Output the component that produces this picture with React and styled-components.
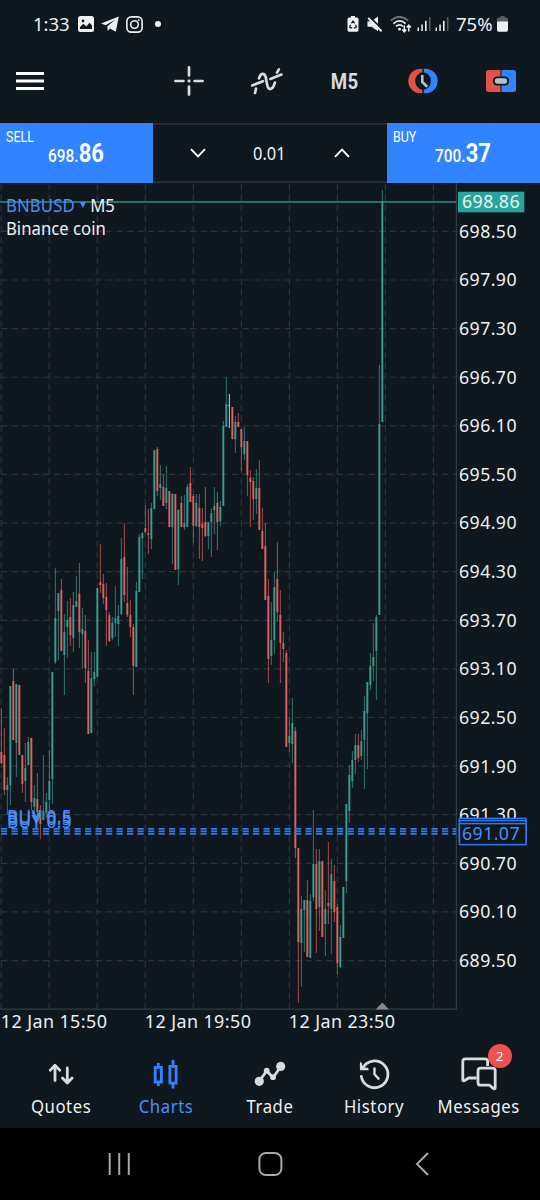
import React from 'react';
import styled, { createGlobalStyle, css } from 'styled-components';

const colors = {
    background: '#0f171f',
    text: '#eef0f2',
    icon: '#d9dbdd',
    blue: '#3183ff',
    link: '#4a8ff5',
    up: '#3a9c90',
    down: '#e0605c',
    flat: '#b9bcb8',
    tag: '#26a69a',
    grid: '#2b343c',
    border: '#333b43',
    badge: '#ef5050'
};

const fonts = {
    main: '"Noto Sans", "Open Sans", sans-serif',
    narrow: 'Roboto, "Liberation Sans", sans-serif'
};

const GlobalStyle = createGlobalStyle`
    * { box-sizing: border-box; }
    body {
        margin: 0;
        background: ${colors.background};
        color: ${colors.text};
        font-family: ${fonts.main};
    }
    svg { display: block; flex: none; }
`;

const Screen = styled.div`
    display: flex;
    flex-direction: column;
    width: 540px;
    height: 1200px;
    overflow: hidden;
    background: ${colors.background};
`;

const StatusBar = styled.header`
    display: flex;
    justify-content: space-between;
    align-items: center;
    height: 48px;
    padding: 0 32px 0 33px;
`;

const StatusGroup = styled.div`
    display: flex;
    align-items: center;
    gap: ${props => props.gap || '6px'};
`;

const StatusText = styled.span`
    width: ${props => props.width || '38px'};
    font-size: 18.5px;
    line-height: 24px;
    white-space: nowrap;
`;

const Toolbar = styled.nav`
    display: grid;
    grid-template-columns: 60px 90px 78px 78px 78px 78px 78px;
    align-items: center;
    height: 75px;
`;

const ToolButton = styled.button`
    display: flex;
    justify-content: center;
    align-items: center;
    height: 66px;
    margin-top: -9px;
    padding: 0;
    border: 0;
    background: none;
    color: ${colors.icon};
`;

const Period = styled.span`
    font-family: ${fonts.narrow};
    font-size: 22.5px;
    font-weight: 700;
    letter-spacing: 0.3px;
    transform: scaleX(0.83);
`;

const Ticket = styled.section`
    display: grid;
    grid-template-columns: 152.5px 1fr 153px;
    height: 60px;
`;

const Deal = styled.button`
    display: flex;
    flex-direction: column;
    padding: 7px 0 0 6px;
    border: 0;
    background: ${colors.blue};
    color: #fff;
    font-family: ${fonts.narrow};
    text-align: left;
`;

const DealName = styled.span`
    font-size: 14.5px;
    line-height: 16px;
    transform: scaleX(0.86);
    transform-origin: left;
`;

const DealPrice = styled.span`
    display: flex;
    justify-content: center;
    align-items: baseline;
    width: 140px;
    margin-top: -4px;
    font-size: 17.5px;
    font-weight: 500;
    line-height: 24px;
    transform: scaleX(0.88);

    b {
        font-size: 25px;
        font-weight: 700;
    }
`;

const Volume = styled.div`
    display: grid;
    grid-template-columns: 90px 1fr 90px;
    align-items: center;
    justify-items: center;
    border-top: 2px solid #262c33;
    border-bottom: 2px solid #262c33;
`;

const VolumeValue = styled.span`
    font-size: 17.5px;
    transform: scaleX(0.94);
`;

const ChartArea = styled.main`
    position: relative;
    height: 857px;
`;

const Caption = styled.div`
    position: absolute;
    top: 11px;
    left: 6px;
    font-size: 17.5px;
    line-height: 22.5px;
    white-space: nowrap;
    transform: scaleX(0.955);
    transform-origin: left;
`;

const SymbolRow = styled.div`
    display: flex;
    align-items: center;
    gap: 4.5px;
`;

const SymbolName = styled.span`
    color: ${colors.link};
    letter-spacing: 0.15px;
`;

const AxisText = styled.text`
    font-family: ${fonts.main};
    font-size: 17.3px;
    letter-spacing: 0.4px;
    fill: ${colors.text};
    ${props => props.$color && css`fill: ${props.$color};`}
`;

const TabBar = styled.nav`
    display: grid;
    grid-template-columns: repeat(5, 1fr);
    height: 88px;
    padding: 16px 9px 0;
`;

const Tab = styled.button`
    position: relative;
    display: flex;
    flex-direction: column;
    align-items: center;
    padding: 0;
    border: 0;
    background: none;
    color: ${props => props.$active ? colors.blue : colors.icon};
`;

const TabLabel = styled.span`
    margin-top: 1px;
    font-family: ${fonts.main};
    font-size: 17.8px;
    line-height: 26px;
    letter-spacing: 0.6px;
    color: ${props => props.$active ? colors.link : colors.text};
    transform: scaleX(0.94);
`;

const Badge = styled.span`
    position: absolute;
    top: -12px;
    left: 61px;
    width: 24px;
    height: 24px;
    border-radius: 50%;
    background: ${colors.badge};
    color: #fff;
    font-family: ${fonts.main};
    font-size: 13px;
    line-height: 24px;
    text-align: center;
`;

const SystemBar = styled.footer`
    display: grid;
    grid-template-columns: 119px 151px 152px;
    flex: 1;
    background: #000;
`;

const SystemButton = styled.button`
    display: flex;
    justify-content: flex-end;
    align-items: center;
    padding: 0;
    border: 0;
    background: none;

    svg { margin-right: -14px; }
`;

// [high, body top, body bottom, low, direction], in page pixels
const candles = [
    [708, 752, 763, 764, 'd'], [728, 755, 790, 795, 'd'], [777, 785, 790, 815, 'u'], [686, 686, 785, 805, 'u'],
    [669, 681, 740, 740, 'd'], [684, 684, 743, 777, 'u'], [685, 685, 755, 755, 'd'], [755, 755, 784, 793, 'd'],
    [743, 768, 781, 802, 'u'], [737, 742, 765, 765, 'u'], [738, 738, 802, 810, 'd'], [785, 798, 807, 813, 'u'],
    [773, 799, 812, 822, 'd'], [805, 810, 824, 839, 'd'], [755, 811, 820, 820, 'u'], [793, 802, 813, 818, 'u'],
    [750, 781, 800, 813, 'u'], [672, 672, 779, 804, 'u'], [568, 618, 662, 664, 'u'], [593, 593, 611, 660, 'u'],
    [579, 590, 651, 651, 'd'], [614, 632, 655, 695, 'u'], [601, 620, 627, 658, 'u'], [598, 617, 635, 646, 'd'],
    [592, 605, 638, 652, 'u'], [576, 601, 607, 607, 'u'], [563, 594, 632, 648, 'd'], [608, 629, 634, 669, 'u'],
    [615, 631, 668, 683, 'd'], [640, 671, 734, 734, 'd'], [652, 678, 733, 733, 'u'], [652, 672, 679, 686, 'u'],
    [588, 588, 677, 677, 'u'], [544, 582, 585, 593, 'd'], [574, 584, 598, 604, 'd'], [583, 597, 610, 646, 'd'],
    [612, 615, 641, 642, 'd'], [617, 623, 638, 640, 'u'], [586, 618, 623, 637, 'u'], [605, 616, 624, 646, 'u'],
    [538, 559, 614, 615, 'u'], [523, 557, 595, 602, 'd'], [567, 603, 615, 617, 'd'], [600, 615, 627, 637, 'd'],
    [624, 627, 666, 695, 'd'], [582, 591, 667, 667, 'u'], [534, 537, 592, 592, 'u'], [532, 533, 538, 579, 'u'],
    [505, 528, 532, 533, 'd'], [509, 533, 535, 554, 'd'], [503, 508, 539, 549, 'u'], [450, 450, 509, 509, 'u'],
    [447, 449, 491, 496, 'd'], [465, 484, 488, 500, 'u'], [474, 487, 506, 506, 'd'], [466, 488, 503, 509, 'u'],
    [491, 491, 527, 527, 'd'], [493, 494, 527, 564, 'u'], [494, 494, 570, 570, 'd'], [509, 510, 569, 585, 'u'],
    [496, 503, 527, 527, 'd'], [495, 523, 527, 530, 'u'], [484, 487, 527, 527, 'u'], [467, 483, 502, 502, 'd'],
    [494, 496, 526, 543, 'd'], [494, 503, 526, 527, 'u'], [494, 508, 527, 559, 'd'], [508, 524, 528, 561, 'd'],
    [487, 522, 536, 537, 'd'], [522, 522, 536, 549, 'u'], [508, 513, 522, 557, 'u'], [487, 506, 510, 534, 'u'],
    [492, 503, 522, 550, 'd'], [501, 507, 521, 526, 'u'], [421, 426, 506, 506, 'u'], [377, 404, 427, 427, 'u'],
    [394, 405, 406, 428, 'f'], [407, 407, 439, 439, 'd'], [416, 422, 439, 453, 'u'], [413, 422, 427, 427, 'd'],
    [429, 429, 447, 471, 'd'], [427, 441, 454, 460, 'u'], [441, 441, 475, 496, 'd'], [470, 478, 482, 527, 'd'],
    [477, 481, 499, 520, 'd'], [469, 488, 499, 514, 'u'], [460, 488, 530, 530, 'd'], [508, 531, 549, 549, 'd'],
    [523, 546, 600, 600, 'd'], [579, 596, 659, 683, 'd'], [602, 640, 656, 665, 'u'], [572, 587, 640, 654, 'u'],
    [542, 579, 612, 622, 'd'], [590, 615, 643, 683, 'd'], [632, 643, 649, 662, 'd'], [650, 653, 747, 747, 'd'],
    [717, 736, 743, 752, 'u'], [698, 723, 744, 763, 'u'], [727, 731, 848, 858, 'd'], [848, 848, 942, 1003, 'd'],
    [896, 909, 943, 987, 'u'], [900, 900, 910, 952, 'u'], [880, 900, 957, 957, 'd'], [894, 901, 958, 958, 'u'],
    [810, 864, 897, 901, 'u'], [849, 864, 909, 953, 'd'], [849, 861, 907, 931, 'u'], [861, 861, 937, 937, 'd'],
    [890, 909, 924, 956, 'u'], [842, 903, 906, 924, 'd'], [859, 874, 909, 954, 'u'], [865, 881, 912, 922, 'd'],
    [904, 907, 963, 974, 'd'], [925, 937, 967, 968, 'u'], [887, 887, 938, 938, 'u'], [804, 804, 881, 893, 'u'],
    [765, 775, 811, 823, 'u'], [751, 760, 781, 788, 'u'], [734, 745, 760, 774, 'u'], [734, 745, 758, 762, 'd'],
    [730, 741, 756, 760, 'u'], [696, 711, 740, 789, 'u'], [682, 682, 713, 769, 'u'], [653, 666, 685, 690, 'u'],
    [623, 657, 666, 681, 'u'], [615, 617, 651, 700, 'u'], [365, 424, 615, 615, 'u'], [190, 202, 422, 422, 'u']
];

const candleColors = { u: colors.up, d: colors.down, f: colors.flat };

const prices = [
    '698.50', '697.90', '697.30', '696.70', '696.10', '695.50', '694.90', '694.30',
    '693.70', '693.10', '692.50', '691.90', '691.30', '690.70', '690.10', '689.50'
];

const times = ['12 Jan 15:50', '12 Jan 19:50', '12 Jan 23:50'];

const positionLines = [828.8, 831.3, 833.8];
const positionLabels = [822.6, 825.2, 827.8];
const positionTags = [818.4, 820.6, 823.6];

const Candle = ({ data, index }) => {
    const [high, top, bottom, low, direction] = data;
    const x = 1.35 + index * 3;
    return (
        <g fill={candleColors[direction]}>
            <rect x={x - 0.5} y={high} width="1.1" height={low - high} opacity={direction === 'f' ? 1 : 0.65} />
            <rect x={x - 0.95} y={top} width="1.9" height={bottom - top} />
        </g>
    );
};

const Label = ({ width, ...rest }) => (
    <AxisText textLength={width} lengthAdjust="spacingAndGlyphs" {...rest} />
);

const Chart = () => (
    <svg width="540" height="857" viewBox="0 183 540 857">
        <g stroke={colors.grid} strokeWidth="1.2" strokeDasharray="6.4 4.1">
            {prices.map((price, i) => (
                <line key={price} x1="1" x2="456" y1={231.4 + i * 48.61} y2={231.4 + i * 48.61} />
            ))}
            {Array.from({ length: 10 }, (_, i) => (
                <line key={i} x1={1.2 + i * 48.03} x2={1.2 + i * 48.03} y1="184" y2="1009" />
            ))}
        </g>
        <path d="M456.4 183V1009.2H0" fill="none" stroke={colors.border} strokeWidth="1.3" />
        <path d="M0 202H456" stroke="#3c8b82" strokeWidth="1.3" />
        {candles.map((data, i) => <Candle key={i} data={data} index={i} />)}
        <path d="M382.3 1002.5L389 1009.5H375.6Z" fill="#85898d" />

        <g stroke="#2f78ee" strokeWidth="1.7" strokeDasharray="6.2 4.3">
            {positionLines.map(y => <line key={y} x1="1" x2="456" y1={y} y2={y} />)}
        </g>
        {positionLabels.map(y => (
            <Label key={y} x="7" y={y} $color={colors.link} width="65">BUY 0.5</Label>
        ))}

        {prices.map((price, i) => (
            <Label key={price} x="459" y={237.8 + i * 48.61} width="58">{price}</Label>
        ))}
        <rect x="458" y="191.7" width="66.3" height="20.6" fill={colors.tag} />
        <Label x="462" y="208.3" width="58">698.86</Label>
        {positionTags.map(y => (
            <rect key={y} x="459.5" y={y} width="66.5" height="21" fill={colors.background} stroke="#2f78ee" strokeWidth="1.5" />
        ))}
        <Label x="462" y="840.2" $color={colors.link} width="58">691.07</Label>
        {times.map((time, i) => (
            <Label key={time} x={0.8 + i * 144} y="1027.8" width="106.5">{time}</Label>
        ))}
    </svg>
);

const ImageIcon = () => (
    <svg width="16" height="16" viewBox="0 0 16 16">
        <rect width="16" height="16" rx="2.5" fill={colors.text} />
        <path d="M2 13V11L5.5 7.8L8.3 10.6L11.5 6.8L14 9.5V13Z" fill={colors.background} />
        <circle cx="5" cy="5" r="1.4" fill={colors.background} />
    </svg>
);

const TelegramIcon = () => (
    <svg width="18" height="16" viewBox="0 0 18 16" fill={colors.text}>
        <path d="M17.8 0.4L14.8 15.8L9 12.4L6.8 15L6.2 10.4L14 3.8L4.6 9.2L0 7.6Z" />
    </svg>
);

const InstagramIcon = () => (
    <svg width="17" height="17" viewBox="0 0 17 17" fill="none" stroke={colors.text} strokeWidth="1.6">
        <rect x="0.9" y="0.9" width="15.2" height="15.2" rx="4.4" />
        <circle cx="8.5" cy="8.5" r="3.8" />
        <circle cx="12.8" cy="4.2" r="0.9" fill={colors.text} stroke="none" />
    </svg>
);

const MoreDot = () => (
    <svg width="16" height="8" viewBox="0 0 16 8" fill={colors.text}>
        <circle cx="8" cy="4" r="3" />
    </svg>
);

const RecycleBattery = () => (
    <svg width="12" height="16" viewBox="0 0 12 16">
        <path d="M4 0H8V1.6H10Q11.5 1.6 11.5 3.2V14Q11.5 15.8 10 15.8H2Q0.5 15.8 0.5 14V3.2Q0.5 1.6 2 1.6H4Z" fill={colors.text} />
        <path d="M4.4 7.4L6 5L7.6 7.4M8.5 8.8L9.4 10.8L8.2 11.8H6.8M5.2 11.8H3.5L2.6 10.8L3.6 8.8" fill="none" stroke={colors.background} strokeWidth="1.2" />
    </svg>
);

const MuteIcon = () => (
    <svg width="16" height="16" viewBox="0 0 16 16">
        <path d="M0.5 5.2H4.5L11 0.5V15.3L4.5 10.8H0.5Z" fill={colors.text} />
        <path d="M2.6 0.8L15.6 13.6" stroke={colors.background} strokeWidth="1.8" />
        <path d="M1.2 2L14.6 15.2" stroke={colors.text} strokeWidth="1.9" />
    </svg>
);

const WifiIcon = () => (
    <svg width="22" height="17" viewBox="0 0 22 17" fill="none" stroke={colors.text} strokeWidth="1.7">
        <path d="M0.8 4.6Q9.5 -3 18.2 4.6" stroke="#71777c" />
        <path d="M3.4 7.6Q9.5 2.2 15.6 7.6" />
        <path d="M6 10.4Q9.5 7.4 13 10.4" />
        <circle cx="9.5" cy="13.2" r="1.4" fill={colors.text} stroke="none" />
        <path d="M14.3 9.4V15.6M12.3 13.6L14.3 15.8L16.3 13.6M18.8 15.6V9.4M16.8 11.4L18.8 9.2L20.8 11.4" strokeWidth="1.5" />
    </svg>
);

const SignalIcon = () => (
    <svg width="14" height="16" viewBox="0 0 14 16" fill={colors.text}>
        <rect x="0.5" y="11.5" width="1.5" height="3.5" />
        <rect x="4.3" y="8.5" width="1.5" height="6.5" />
        <rect x="8" y="4.8" width="1.6" height="10.2" />
        <rect x="12" y="1" width="1.5" height="14" fill="#596066" />
    </svg>
);

const BatteryIcon = () => (
    <svg width="11" height="16" viewBox="0 0 11 16">
        <path d="M3.5 0H7.5V1.6H9.5Q11 1.6 11 3.2V6H0V3.2Q0 1.6 1.5 1.6H3.5Z" fill="#596066" />
        <path d="M0 5.5H11V14Q11 15.8 9.5 15.8H1.5Q0 15.8 0 14Z" fill={colors.text} />
    </svg>
);

const MenuIcon = () => (
    <svg width="28" height="20" viewBox="0 0 28 20" stroke="#fff" strokeWidth="3">
        <path d="M0 2.4H28M0 10H28M0 17.6H28" />
    </svg>
);

const CrosshairIcon = () => (
    <svg width="32" height="32" viewBox="0 0 32 32" stroke="currentColor" strokeWidth="2.7" strokeLinecap="round">
        <path d="M16 2.4V10.4M16 21.6V29.6M2.4 16H10.4M21.6 16H29.6" />
        <rect x="14.6" y="14.6" width="2.8" height="2.8" stroke="none" fill="currentColor" />
    </svg>
);

const IndicatorIcon = () => (
    <svg width="34" height="30" viewBox="0 0 34 30" fill="none" stroke="currentColor" strokeWidth="2.7" strokeLinecap="round">
        <path d="M5 27L6 22.6" />
        <path d="M9 12.4C10.6 7 14.4 6.2 15.8 11.4C16.6 14.6 16.6 18.6 18 21.4C19.6 24.4 23 23.4 24.9 16.6" />
        <path d="M27 6.6L28.9 3.4" />
        <path d="M2.2 19.4L13 15.2M20.4 12.9L31.4 8.6" />
    </svg>
);

const ClockIcon = () => (
    <svg width="30" height="26" viewBox="0 0 30 26">
        <path d="M14.3 0.8H12.5A12.2 12.2 0 0 0 12.5 25.2H14.3V21.8A9 9 0 0 1 14.3 4.2Z" fill="#de5248" />
        <path d="M15.8 0.8H17.5A12.2 12.2 0 0 1 17.5 25.2H15.8V21.8A9 9 0 0 0 15.8 4.2Z" fill={colors.blue} />
        <path d="M14.3 7V14L19.2 18.8" fill="none" stroke="#bac3c6" strokeWidth="2.6" />
    </svg>
);

const OneClickIcon = () => (
    <svg width="30" height="22" viewBox="0 0 30 22">
        <path d="M14.5 0H2.5Q0 0 0 2.5V19.5Q0 22 2.5 22H14.5Z" fill="#de5248" />
        <path d="M15.5 0H27.5Q30 0 30 2.5V19.5Q30 22 27.5 22H15.5Z" fill={colors.blue} />
        <rect x="8" y="7.4" width="14" height="7.2" rx="3.2" fill="#b4c3c9" stroke={colors.background} strokeWidth="1.8" />
    </svg>
);

const Chevron = ({ up }) => (
    <svg width="16" height="10" viewBox="0 0 16 10" fill="none" stroke="#fff" strokeWidth="1.9">
        <path d={up ? 'M1 8.8L8 1.6L15 8.8' : 'M1 1.2L8 8.4L15 1.2'} />
    </svg>
);

const TabIcon = ({ children }) => (
    <svg width="40" height="36" viewBox="0 0 40 36" fill="none" stroke="currentColor" strokeWidth="2.8" strokeLinejoin="round">
        {children}
    </svg>
);

const tabs = [
    {
        label: 'Quotes',
        icon: <path d="M14 24.5V9.6M9.2 14.2L14 9.2L18.8 14.2M26.3 12V26.6M21.5 22L26.3 27L31.1 22" strokeLinecap="round" />
    },
    {
        label: 'Charts',
        active: true,
        icon: <path d="M9.2 11.3H15.4V26H9.2ZM12.3 11V7M12.3 26V30M23.9 10.3H30.1V27.2H23.9ZM27 10V4M27 27V32.6" strokeLinejoin="miter" />
    },
    {
        label: 'Trade',
        icon: (
            <>
                <path d="M9.3 25.3L16.7 14.7L23 21.7L30.7 10.7" />
                <g fill="currentColor" stroke="none">
                    <circle cx="9.3" cy="25.3" r="4.6" />
                    <circle cx="16.7" cy="14.7" r="2.9" />
                    <circle cx="23" cy="21.2" r="2.9" />
                    <circle cx="30.7" cy="10.4" r="4.6" />
                </g>
            </>
        )
    },
    {
        label: 'History',
        icon: (
            <>
                <path d="M8.7 12A13.4 13.4 0 1 1 7.3 20.4" strokeLinecap="round" />
                <path d="M6 5.5L6 14.2H15L12.4 11.6L9.6 11.2Z" fill="currentColor" stroke="none" />
                <path d="M6.9 6.8V13H14.4" strokeWidth="2" />
                <path d="M20.5 11.5V18.3L25.2 23.4" strokeWidth="2.4" />
            </>
        )
    },
    {
        label: 'Messages',
        badge: 2,
        icon: (
            <>
                <path d="M28.6 10V5.6Q28.6 2.8 25.8 2.8H6.6Q3.8 2.8 3.8 5.6V23.4Q3.8 25.8 6 24.4L9.6 22H17.6" />
                <path d="M21.8 12.2H33.4Q36.2 12.2 36.2 15V31.4Q36.2 33.8 34.2 32.4L30.6 29.2H21.8Q19 29.2 19 26.4V15Q19 12.2 21.8 12.2Z" />
            </>
        )
    }
];

export default function App() {
    return (
        <Screen>
            <GlobalStyle />
            <StatusBar>
                <StatusGroup gap="7px">
                    <StatusText>1:33</StatusText>
                    <ImageIcon />
                    <TelegramIcon />
                    <InstagramIcon />
                    <MoreDot />
                </StatusGroup>
                <StatusGroup gap="7px">
                    <StatusGroup gap="8px">
                        <RecycleBattery />
                        <MuteIcon />
                    </StatusGroup>
                    <StatusGroup gap="4.5px">
                        <WifiIcon />
                        <SignalIcon />
                        <SignalIcon />
                    </StatusGroup>
                    <StatusGroup gap="2px">
                        <StatusText width="39px">75%</StatusText>
                        <BatteryIcon />
                    </StatusGroup>
                </StatusGroup>
            </StatusBar>

            <Toolbar>
                <ToolButton><MenuIcon /></ToolButton>
                <span />
                <ToolButton><CrosshairIcon /></ToolButton>
                <ToolButton><IndicatorIcon /></ToolButton>
                <ToolButton><Period>M5</Period></ToolButton>
                <ToolButton><ClockIcon /></ToolButton>
                <ToolButton><OneClickIcon /></ToolButton>
            </Toolbar>

            <Ticket>
                <Deal>
                    <DealName>SELL</DealName>
                    <DealPrice>698.<b>86</b></DealPrice>
                </Deal>
                <Volume>
                    <Chevron />
                    <VolumeValue>0.01</VolumeValue>
                    <Chevron up />
                </Volume>
                <Deal>
                    <DealName>BUY</DealName>
                    <DealPrice>700.<b>37</b></DealPrice>
                </Deal>
            </Ticket>

            <ChartArea>
                <Chart />
                <Caption>
                    <SymbolRow>
                        <SymbolName>BNBUSD</SymbolName>
                        <svg width="7" height="6" viewBox="0 0 7 6"><path d="M0.4 0H6.6L3.5 6Z" fill={colors.link} /></svg>
                        <span>M5</span>
                    </SymbolRow>
                    <div>Binance coin</div>
                </Caption>
            </ChartArea>

            <TabBar>
                {tabs.map(({ label, icon, active, badge }) => (
                    <Tab key={label} $active={active}>
                        <TabIcon>{icon}</TabIcon>
                        <TabLabel $active={active}>{label}</TabLabel>
                        {badge && <Badge>{badge}</Badge>}
                    </Tab>
                ))}
            </TabBar>

            <SystemBar>
                <SystemButton>
                    <svg width="28" height="24" viewBox="0 0 28 24" stroke="#a9a9a9" strokeWidth="2">
                        <path d="M4.7 1V23M14.2 1V23M23.8 1V23" />
                    </svg>
                </SystemButton>
                <SystemButton>
                    <svg width="28" height="24" viewBox="0 0 28 24" fill="none" stroke="#a9a9a9" strokeWidth="2">
                        <rect x="3.4" y="1" width="22" height="22" rx="6.5" />
                    </svg>
                </SystemButton>
                <SystemButton>
                    <svg width="28" height="24" viewBox="0 0 28 24" fill="none" stroke="#a9a9a9" strokeWidth="2">
                        <path d="M20 1L9 12L20 23" />
                    </svg>
                </SystemButton>
            </SystemBar>
        </Screen>
    );
}
